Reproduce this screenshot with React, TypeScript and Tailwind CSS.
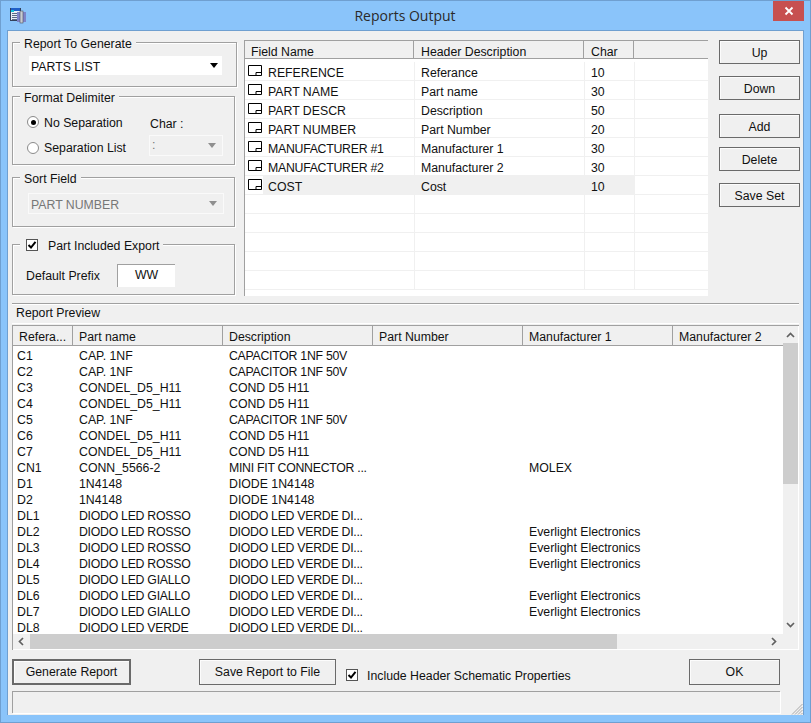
import React from "react";

const font = "font-['Liberation_Sans',Arial,sans-serif]";

function Group({ label, className, children }: { label: React.ReactNode; className: string; children?: React.ReactNode }) {
  return (
    <div className={`relative border border-[#a0a0a0] shadow-[1px_1px_0_#fff,inset_1px_1px_0_#fff] ${className}`}>
      <div className="absolute left-[7px] top-[-3px] bg-[#f0f0f0] px-[4px] leading-[15px] h-[9px] flex items-center whitespace-nowrap">{label}</div>
      {children}
    </div>
  );
}

function Arrow({ color = "#000" }: { color?: string }) {
  return <div className="w-0 h-0 border-x-[4px] border-x-transparent border-t-[5px]" style={{ borderTopColor: color }} />;
}

function Btn({ children, className }: { children: React.ReactNode; className: string }) {
  return <div className={`flex items-center justify-center border border-[#6a6a6a] bg-[#f0f0f0] shadow-[inset_1px_1px_0_#fcfcfc] text-[12.3px] text-[#111] ${className}`}>{children}</div>;
}

function Check({ className = "" }: { className?: string }) {
  return (
    <div className={`w-[12px] h-[12px] bg-white border border-[#555] shrink-0 flex items-center justify-center ${className}`}>
      <svg width="10" height="10" viewBox="0 0 10 10"><path d="M1.5 5 L4 7.5 L8.5 1.8" fill="none" stroke="#000" strokeWidth="2" /></svg>
    </div>
  );
}

function Radio({ on, className = "" }: { on?: boolean; className?: string }) {
  return (
    <div className={`w-[12px] h-[12px] rounded-full bg-white border border-[#8a8a8a] flex items-center justify-center shrink-0 ${className}`}>
      {on && <div className="w-[5px] h-[5px] rounded-full bg-black" />}
    </div>
  );
}

function RowIcon() {
  return (
    <svg width="14" height="11" viewBox="0 0 14 11" className="shrink-0">
      <path d="M0.5 0.5 H13.5 V10.5 H0.5 Z" fill="#fff" stroke="#000" />
      <path d="M8 10.5 V7.5 H13.5" fill="none" stroke="#000" />
    </svg>
  );
}

const fields = [
  ["REFERENCE", "Referance", "10"],
  ["PART NAME", "Part name", "30"],
  ["PART DESCR", "Description", "50"],
  ["PART NUMBER", "Part Number", "20"],
  ["MANUFACTURER #1", "Manufacturer 1", "30"],
  ["MANUFACTURER #2", "Manufacturer 2", "30"],
  ["COST", "Cost", "10"],
];

const d1 = "CAPACITOR 1NF 50V";
const d2 = "COND D5 H11";
const dl = "DIODO LED VERDE DI...";
const ev = "Everlight Electronics";
const rows = [
  ["C1", "CAP. 1NF", d1, ""],
  ["C2", "CAP. 1NF", d1, ""],
  ["C3", "CONDEL_D5_H11", d2, ""],
  ["C4", "CONDEL_D5_H11", d2, ""],
  ["C5", "CAP. 1NF", d1, ""],
  ["C6", "CONDEL_D5_H11", d2, ""],
  ["C7", "CONDEL_D5_H11", d2, ""],
  ["CN1", "CONN_5566-2", "MINI FIT CONNECTOR ...", "MOLEX"],
  ["D1", "1N4148", "DIODE 1N4148", ""],
  ["D2", "1N4148", "DIODE 1N4148", ""],
  ["DL1", "DIODO LED ROSSO", dl, ""],
  ["DL2", "DIODO LED ROSSO", dl, ev],
  ["DL3", "DIODO LED ROSSO", dl, ev],
  ["DL4", "DIODO LED ROSSO", dl, ev],
  ["DL5", "DIODO LED GIALLO", dl, ""],
  ["DL6", "DIODO LED GIALLO", dl, ev],
  ["DL7", "DIODO LED GIALLO", dl, ev],
  ["DL8", "DIODO LED VERDE", dl, ""],
];

const previewCols = [
  ["Refera...", "w-[60px]"],
  ["Part name", "w-[150px]"],
  ["Description", "w-[150px]"],
  ["Part Number", "w-[150px]"],
  ["Manufacturer 1", "w-[150px]"],
  ["Manufacturer 2", "flex-1"],
];

const tight = (s: string) => (s.length >= 15 ? "tracking-[-0.27px]" : "");

export default function App() {
  return (
    <div className={`${font} w-[811px] h-[723px] bg-[#8ac4fa] border border-[#6f9fd0] flex flex-col text-[12.3px] text-[#111] overflow-hidden`}>
      {/* title bar */}
      <div className="h-[29px] shrink-0 flex items-start">
        <svg width="17" height="17" viewBox="0 0 17 17" className="ml-[9px] mt-[6px] shrink-0">
          <rect x="0.5" y="1.5" width="10" height="12" fill="#e8eef5" stroke="#33415c" />
          <rect x="1" y="1" width="9" height="3" fill="#1f5fc8" />
          <rect x="1" y="3" width="3" height="2" fill="#12c5d9" />
          <path d="M2 6.5h6M2 8.5h6M2 10.5h6M2 12.5h6" stroke="#5b6a85" />
          <rect x="7" y="5" width="9" height="10" fill="#7e84c9" />
          <rect x="10" y="4" width="3" height="12" fill="#c8ccd2" stroke="#4a4f60" strokeWidth="0.6" />
        </svg>
        <div className="flex-1 text-center font-['Open_Sans',sans-serif] text-[14px] text-[#2a2a2a] mt-[5px] leading-[20px] pl-[10px]">Reports Output</div>
        <div className="w-[31px] h-[20px] bg-[#c75050] flex items-center justify-center mr-[6px] shrink-0">
          <svg width="10" height="10" viewBox="0 0 10 10"><path d="M1.5 1.5 L8.5 8.5 M8.5 1.5 L1.5 8.5" stroke="#fff" strokeWidth="1.8" /></svg>
        </div>
      </div>

      {/* client */}
      <div className="relative mx-[6px] h-[685px] bg-[#f0f0f0] border border-[#6f9fd0] border-b-0 flex flex-col pl-[4px] pr-[3px]">
        <div className="flex items-start mt-[9px] h-[257px] shrink-0">
          {/* left */}
          <div className="w-[232px] shrink-0 flex flex-col pt-[2px]">
            <Group label="Report To Generate" className="h-[45px] w-[225px]">
              <div className="mt-[13px] ml-[16px] w-[193px] h-[19px] bg-white flex items-center justify-between pl-[2px] pr-[4px]">
                <span className="mt-[3px]">PARTS LIST</span>
                <Arrow />
              </div>
            </Group>
            <Group label="Format Delimiter" className="h-[69px] w-[223px] mt-[9px]">
              <div className="flex flex-col pl-[14px] pt-[16px]">
                <div className="flex items-center h-[18px]">
                  <Radio on />
                  <span className="ml-[5px] w-[106px] mt-[2px]">No Separation</span>
                  <span className="mt-[4px]">Char :</span>
                </div>
                <div className="flex items-start h-[21px] mt-[4px]">
                  <Radio className="mt-[7px]" />
                  <span className="ml-[5px] w-[105px] mt-[6px] leading-[15px]">Separation List</span>
                  <div className="w-[74px] h-[21px] border border-[#fafafa] flex items-center justify-between pl-[2px] pr-[6px] text-[#777]">
                    <span>:</span>
                    <Arrow color="#8f8f8f" />
                  </div>
                </div>
              </div>
            </Group>
            <Group label="Sort Field" className="h-[50px] w-[223px] mt-[12px]">
              <div className="mt-[15px] ml-[15px] w-[196px] h-[21px] border border-[#fafafa] flex items-center justify-between pl-[2px] pr-[6px] text-[#777]">
                <span className="mt-[3px]">PART NUMBER</span>
                <Arrow color="#8f8f8f" />
              </div>
            </Group>
            <Group
              className="h-[51px] w-[223px] mt-[17px]"
              label={<><Check className="mr-[10px] ml-[2px] -mt-[4px]" /><span>Part Included Export</span></>}
            >
              <div className="flex items-center mt-[19px] ml-[13px]">
                <span className="w-[91px] mt-[2px]">Default Prefix</span>
                <div className="w-[58px] h-[23px] bg-white border-l border-t border-[#a0a0a0] flex items-start justify-center pt-[1px]">WW</div>
              </div>
            </Group>
          </div>

          {/* fields table */}
          <div className="w-[464px] h-[256px] shrink-0 bg-white border-l border-t border-[#a0a0a0] flex flex-col overflow-hidden">
            <div className="flex h-[18px] bg-[#f0f0f0] border-b border-[#a0a0a0] shrink-0">
              <div className="w-[169px] pl-[6px] border-r border-[#a0a0a0] leading-[22px]">Field Name</div>
              <div className="w-[170px] pl-[7px] border-r border-[#a0a0a0] leading-[22px]">Header Description</div>
              <div className="w-[50px] pl-[7px] border-r border-[#a0a0a0] leading-[22px]">Char</div>
              <div className="flex-1" />
            </div>
            <div className="flex flex-col pt-[3px]">
              {Array.from({ length: 12 }).map((_, i) => {
                const f = fields[i];
                const sel = i === 6;
                return (
                  <div key={i} className="flex h-[19px] shrink-0 border-b border-[#f0f0f0]">
                    <div className="w-[170px] flex border-r border-[#f0f0f0]">
                      <div className="w-[18px] shrink-0 pl-[3px] pt-[3px]">{f && <RowIcon />}</div>
                      <div className={`flex-1 pl-[5px] leading-[22px] ${f ? tight(f[0]) : ""} ${sel ? "bg-[#f0f0f0]" : ""}`}>{f?.[0]}</div>
                    </div>
                    <div className={`w-[170px] pl-[6px] leading-[22px] border-r border-[#f0f0f0] ${sel ? "bg-[#f0f0f0]" : ""}`}>{f?.[1]}</div>
                    <div className={`w-[50px] pl-[6px] leading-[22px] border-r border-[#f0f0f0] ${sel ? "bg-[#f0f0f0]" : ""}`}>{f?.[2]}</div>
                    <div className="flex-1" />
                  </div>
                );
              })}
            </div>
          </div>

          {/* side buttons */}
          <div className="ml-[11px] w-[81px] shrink-0 flex flex-col">
            <Btn className="h-[24px] pt-[2px]">Up</Btn>
            <Btn className="h-[24px] pt-[2px] mt-[12px]">Down</Btn>
            <Btn className="h-[24px] pt-[2px] mt-[14px]">Add</Btn>
            <Btn className="h-[24px] pt-[2px] mt-[9px]">Delete</Btn>
            <Btn className="h-[24px] pt-[2px] mt-[12px]">Save Set</Btn>
          </div>
        </div>

        {/* preview caption */}
        <div className="mt-[6px] h-[21px] w-[787px] border-t border-[#a0a0a0] shadow-[inset_0_1px_0_#fff] flex items-center pl-[4px] shrink-0 border-b border-b-white">Report Preview</div>

        {/* preview list */}
        <div className="relative mt-[1px] w-[787px] h-[325px] shrink-0 border-l border-t border-[#a0a0a0] bg-white flex flex-col overflow-hidden">
          <div className="flex h-[20px] w-[770px] shrink-0 bg-[#f0f0f0] border-b border-[#a0a0a0]">
            {previewCols.map(([t, w], i) => (
              <div key={i} className={`${w} ${i < 5 ? "border-r border-[#a0a0a0]" : ""} pl-[6px] leading-[22px] whitespace-nowrap`}>{t}</div>
            ))}
          </div>
          <div className="flex flex-1 min-h-0">
            <div className="w-[770px] shrink-0 flex flex-col pt-[2px] overflow-hidden">
              {rows.map((r, i) => (
                <div key={i} className="flex h-[16px] shrink-0 leading-[16px] whitespace-nowrap">
                  <div className="w-[66px] pl-[4px]">{r[0]}</div>
                  <div className={`w-[150px] ${tight(r[1])}`}>{r[1]}</div>
                  <div className={`w-[300px] ${tight(r[2])}`}>{r[2]}</div>
                  <div>{r[3]}</div>
                </div>
              ))}
            </div>
          </div>
          {/* vertical scrollbar */}
          <div className="absolute right-[1px] top-0 bottom-[1px] w-[15px] bg-[#f0f0f0] flex flex-col items-center">
            <svg width="9" height="6" viewBox="0 0 9 6" className="mt-[6px]"><path d="M1 5 L4.5 1.5 L8 5" fill="none" stroke="#606060" strokeWidth="1.7" /></svg>
            <div className="w-[15px] h-[141px] bg-[#cdcdcd] mt-[5px]" />
            <div className="flex-1" />
            <svg width="9" height="6" viewBox="0 0 9 6" className="mb-[21px]"><path d="M1 1 L4.5 4.5 L8 1" fill="none" stroke="#606060" strokeWidth="1.7" /></svg>
          </div>
          {/* horizontal scrollbar */}
          <div className="absolute left-0 right-[16px] bottom-[1px] h-[15px] bg-[#f0f0f0] flex items-center">
            <svg width="6" height="9" viewBox="0 0 6 9" className="ml-[5px]"><path d="M5 1 L1.5 4.5 L5 8" fill="none" stroke="#606060" strokeWidth="1.7" /></svg>
            <div className="w-[587px] h-[15px] bg-[#cdcdcd] ml-[6px]" />
            <div className="flex-1" />
            <svg width="6" height="9" viewBox="0 0 6 9" className="mr-[6px]"><path d="M1 1 L4.5 4.5 L1 8" fill="none" stroke="#606060" strokeWidth="1.7" /></svg>
          </div>
        </div>

        {/* bottom buttons */}
        <div className="flex items-start mt-[9px] h-[26px] shrink-0">
          <Btn className="w-[119px] h-[26px] border-2 border-[#6a6a6a]">Generate Report</Btn>
          <Btn className="w-[137px] h-[26px] ml-[68px]">Save Report to File</Btn>
          <Check className="ml-[10px] mt-[10px]" />
          <span className="ml-[9px] mt-[10px] leading-[15px]">Include Header Schematic Properties</span>
          <div className="flex-1" />
          <Btn className="w-[91px] h-[26px] mr-[20px]">OK</Btn>
        </div>

        {/* status bar */}
        <div className="mt-[6px] h-[22px] w-[768px] border-t border-l border-[#a0a0a0] shadow-[1px_1px_0_#fff] shrink-0" />

        {/* grip */}
        <svg width="12" height="12" viewBox="0 0 12 12" className="absolute right-[0px] bottom-[0px]">
          <path d="M11.5 1 L1 11.5 M11.5 4 L4 11.5 M11.5 7 L7 11.5 M11.5 10 L10 11.5" stroke="#a8a8a8" strokeWidth="1" />
        </svg>
      </div>
      <div className="flex-1" />
    </div>
  );
}
